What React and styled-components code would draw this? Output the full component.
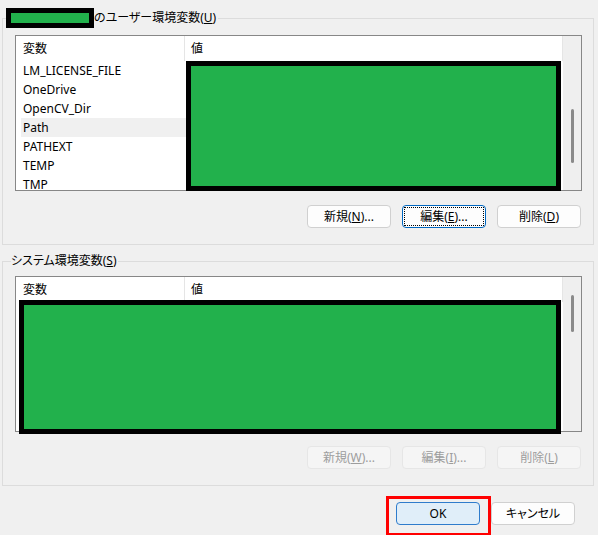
import React from 'react';
import styled, { createGlobalStyle } from 'styled-components';

const GlobalStyle = createGlobalStyle`
  body {
    margin: 0;
    background: #f0f0f0;
  }
`;

const Window = styled.div`
  width: 598px;
  height: 535px;
  overflow: hidden;
  box-sizing: border-box;
  padding: 8px 4px 0 2px;
  display: flex;
  flex-direction: column;
  background: #f0f0f0;
  color: #000;
  font-family: "Noto Sans", "Noto Sans CJK JP", sans-serif;
  font-size: 12px;
  font-feature-settings: "palt";
`;

const Group = styled.fieldset`
  margin: ${({ $gap }) => $gap || 0}px 0 0 0;
  padding: ${({ $top }) => $top}px 11px 16px 12px;
  border: 1px solid #dcdcdc;
  min-width: 0;
`;

const Legend = styled.legend`
  margin-left: -4px;
  padding: 0 2px 0 0;
  height: 20px;
  line-height: 20px;
  white-space: nowrap;
`;

const LegendMask = styled.span`
  display: inline-block;
  vertical-align: top;
  box-sizing: border-box;
  width: 88px;
  height: 20px;
  margin-left: -5px;
  border: 5px solid #000;
  background: #22b14c;
`;

const List = styled.div`
  height: 156px;
  box-sizing: border-box;
  border: 1px solid #878787;
  background: #fff;
  display: flex;
`;

const ListMain = styled.div`
  flex: 1;
  min-width: 0;
  display: flex;
  flex-direction: column;
`;

const Header = styled.div`
  display: flex;
  height: 25px;
  flex-shrink: 0;
`;

const HeadCell = styled.div`
  width: ${({ $w }) => $w}px;
  box-sizing: border-box;
  padding-left: ${({ $pad }) => $pad}px;
  line-height: 25px;
  border-right: 1px solid #e5e5e5;
`;

const Body = styled.div`
  flex: 1;
  min-height: 0;
  display: flex;
  align-items: flex-start;
`;

const NameCol = styled.div`
  width: 170px;
  flex-shrink: 0;
  height: 100%;
  overflow: hidden;
  box-sizing: border-box;
  padding-left: 5px;
`;

const Row = styled.div`
  height: 19px;
  line-height: 19px;
  padding-left: 2px;
  background: ${({ $selected }) => ($selected ? '#f0f0f0' : 'transparent')};
  white-space: nowrap;
`;

const Mask = styled.div`
  flex: 1;
  box-sizing: border-box;
  height: ${({ $h }) => $h}px;
  margin: ${({ $top }) => $top || 0}px 2px 0 ${({ $left }) => $left || 0}px;
  border: 5px solid #000;
  background: #22b14c;
  position: relative;
  z-index: 1;
`;

const Scrollbar = styled.div`
  width: 18px;
  flex-shrink: 0;
  background: #efefef;
  display: flex;
  justify-content: center;
`;

const Thumb = styled.div`
  width: 3px;
  border-radius: 2px;
  background: #8a8a8a;
  margin-top: ${({ $top }) => $top}px;
  height: ${({ $h }) => $h}px;
`;

const ButtonRow = styled.div`
  display: flex;
  justify-content: flex-end;
  gap: 11px;
  margin: 14px 1px 0 0;
`;

const Button = styled.button`
  position: relative;
  width: 84px;
  height: 23px;
  box-sizing: border-box;
  padding: 0;
  border-radius: 4px;
  font: inherit;
  line-height: 21px;
  color: ${({ disabled }) => (disabled ? '#9d9d9d' : '#000')};
  background: ${({ disabled }) => (disabled ? '#f5f5f5' : '#fdfdfd')};
  border: 1px solid ${({ disabled, $focused }) => ($focused ? '#0067c0' : disabled ? '#e6e6e6' : '#d0d0d0')};

  ${({ $focused }) => $focused && `
    &::after {
      content: '';
      position: absolute;
      inset: 1px;
      border: 1px dotted #000;
    }
  `}
`;

const PrimaryButton = styled(Button)`
  background: #e0eef9;
  border-color: #2f7ccc;
`;

const Footer = styled.div`
  display: flex;
  justify-content: flex-end;
  align-items: flex-start;
  margin: 10px 19px 0 0;
`;

const Highlight = styled.div`
  border: 3px solid #ff0000;
  padding: 3px 8px 8px 7px;
`;

const CancelButton = styled(Button)`
  margin-top: 6px;
`;

const userVars = ['LM_LICENSE_FILE', 'OneDrive', 'OpenCV_Dir', 'Path', 'PATHEXT', 'TEMP', 'TMP'];

function ListHeader() {
  return (
    <Header>
      <HeadCell $w={169} $pad={7}>変数</HeadCell>
      <HeadCell $w={378} $pad={6}>値</HeadCell>
    </Header>
  );
}

export default function App() {
  return (
    <Window>
      <GlobalStyle />
      <Group $top={7}>
        <Legend>
          <LegendMask />のユーザー環境変数(<u>U</u>)
        </Legend>
        <List>
          <ListMain>
            <ListHeader />
            <Body>
              <NameCol>
                {userVars.map((name) => (
                  <Row key={name} $selected={name === 'Path'}>{name}</Row>
                ))}
              </NameCol>
              <Mask $h={130} />
            </Body>
          </ListMain>
          <Scrollbar>
            <Thumb $top={73} $h={54} />
          </Scrollbar>
        </List>
        <ButtonRow>
          <Button>新規(<u>N</u>)...</Button>
          <Button $focused>編集(<u>E</u>)...</Button>
          <Button>削除(<u>D</u>)</Button>
        </ButtonRow>
      </Group>

      <Group $gap={6} $top={5}>
        <Legend>システム環境変数(<u>S</u>)</Legend>
        <List>
          <ListMain>
            <ListHeader />
            <Body>
              <Mask $h={134} $top={-2} $left={3} />
            </Body>
          </ListMain>
          <Scrollbar>
            <Thumb $top={18} $h={37} />
          </Scrollbar>
        </List>
        <ButtonRow>
          <Button disabled>新規(<u>W</u>)...</Button>
          <Button disabled>編集(<u>I</u>)...</Button>
          <Button disabled>削除(<u>L</u>)</Button>
        </ButtonRow>
      </Group>

      <Footer>
        <Highlight>
          <PrimaryButton>OK</PrimaryButton>
        </Highlight>
        <CancelButton>キャンセル</CancelButton>
      </Footer>
    </Window>
  );
}
